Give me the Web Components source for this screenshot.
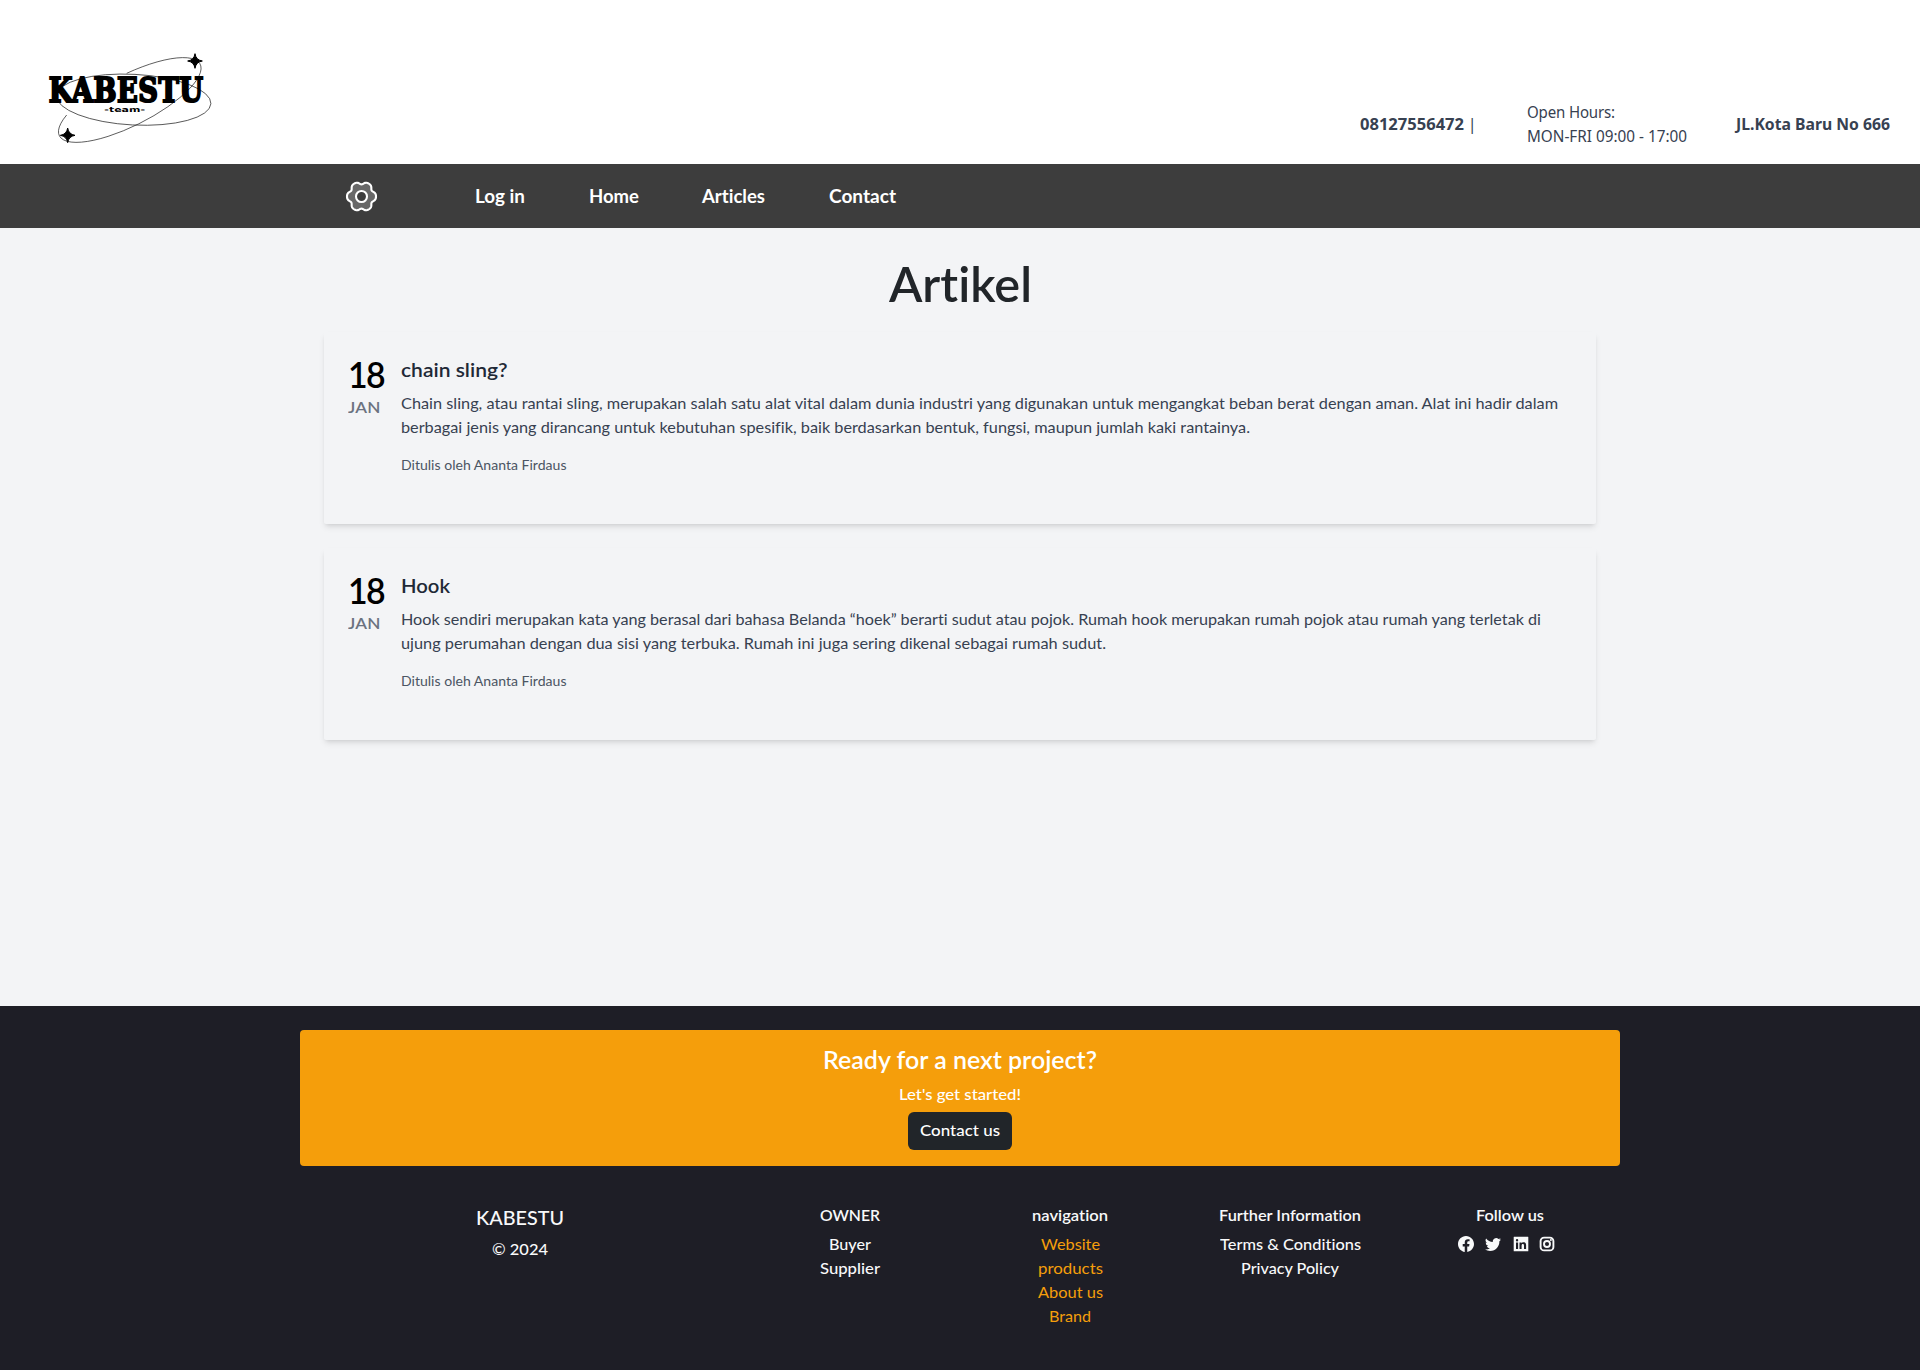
<!DOCTYPE html>
<html lang="id">
<head>
<meta charset="utf-8">
<title>Artikel - KABESTU</title>
<style>
html,body{margin:0;padding:0}
body{font-family:Lato,"Open Sans",sans-serif;font-size:16px;line-height:24px;font-variant-ligatures:none;background:#f3f4f6;color:#212529}
</style>
</head>
<body>
<kb-page></kb-page>
<script>
// A single line of text fitted to an exact width (attribute w, in px):
// the glyphs are stretched a little, and letter-spacing takes up the rest.
customElements.define('fit-line', class extends HTMLElement {
  connectedCallback() {
    if (!this.shadowRoot) this.attachShadow({mode: 'open'}).innerHTML =
      '<style>:host{display:block;white-space:nowrap;text-align:left}span{display:inline-block;transform-origin:0 50%;font-variant-ligatures:none}</style><span><slot></slot></span>';
    const s = this.shadowRoot.querySelector('span');
    const w = parseFloat(this.getAttribute('w'));
    if (!w) return;
    const natural = s.getBoundingClientRect().width;
    const k = Math.min(1.07, Math.max(.94, w / natural));
    s.style.letterSpacing = ((w / k - natural) / this.textContent.length).toFixed(3) + 'px';
    s.style.transform = `scaleX(${k.toFixed(4)})`;
    this.style.width = w + 'px';
  }
});

const element = (name, html) => customElements.define(name, class extends HTMLElement {
  connectedCallback() {
    if (!this.shadowRoot) this.attachShadow({mode: 'open'}).innerHTML = html;
  }
});

element('kb-logo', `<style>:host{display:block;width:200px;height:120px}svg{display:block}</style>
<svg width="200" height="120" viewBox="0 0 600 360" fill="none" stroke="#222" stroke-width="2.2">
<ellipse cx="311" cy="179" rx="232" ry="76" transform="rotate(3 311 179)"/>
<path d="M290 100A237 76 -27 1 1 110 225"/>
<g fill="#000" stroke="none">
<path d="M495 41Q498 60 517 63Q498 66 495 85Q492 66 473 63Q492 60 495 41Z" stroke="#000" stroke-width="3"/>
<path d="M113 264Q116 283 135 286Q116 289 113 308Q110 289 91 286Q110 283 113 264Z" stroke="#000" stroke-width="3"/>
<text transform="translate(56 186) scale(.88 1.1)" font-family="DejaVu Serif,serif" font-weight="700" font-size="93" textLength="526" stroke="#000" stroke-width="6">KABESTU</text>
<text x="223" y="217" font-family="DejaVu Sans,sans-serif" font-weight="700" font-size="21" textLength="122" lengthAdjust="spacingAndGlyphs">-team-</text>
</g></svg>`);

customElements.define('kb-gear', class extends HTMLElement {
  connectedCallback() {
    let d = '';
    for (let i = 0; i < 120; i++) {
      const t = i * Math.PI / 60, r = 13.4 + 1.4 * Math.cos(6 * t) - .3 * Math.cos(12 * t);
      d += (i ? 'L' : 'M') + (16.5 + r * Math.cos(t)).toFixed(2) + ' ' + (16.5 + r * Math.sin(t) * 1.03).toFixed(2);
    }
    this.attachShadow({mode: 'open'}).innerHTML = `<style>:host{display:block;width:33px;height:32px}svg{display:block}</style>
<svg width="33" height="33" viewBox="0 0 33 33" fill="none" stroke="#fff" stroke-width="2.1"><path fill="#686868" d="${d}Z"/><circle cx="16.5" cy="16.5" r="5.500" fill="#3d3d3d"/></svg>`;
  }
});

element('kb-header', `<style>
:host{display:flex;height:164px;background:#fff;justify-content:space-between;box-sizing:border-box;padding:40px 30px 0 30px;color:#374151;font-family:"Noto Sans","Open Sans",sans-serif;font-size:16px}
.info{display:flex;align-items:center;height:48px;margin-top:60px}
.hours{margin:0 49.500px 0 50px}
.phone{display:flex;gap:4px}
.phone span{font-weight:400}
b{font-weight:700}
</style>
<kb-logo></kb-logo>
<div class="info"><b class="phone"><fit-line w="104">08127556472</fit-line><span>|</span></b>
<div class="hours"><fit-line w="88">Open Hours:</fit-line><fit-line w="160">MON-FRI 09:00 - 17:00</fit-line></div>
<b><fit-line w="154">JL.Kota Baru No 666</fit-line></b></div>`);

element('kb-nav', `<style>
:host{display:flex;align-items:center;height:64px;background:#3d3d3d;color:#fff;font-size:18px;font-weight:700;padding-left:345px}
nav{display:flex;gap:63.600px;margin-left:97px}
</style><kb-gear></kb-gear>
<nav><fit-line w="50">Log in</fit-line><fit-line w="50">Home</fit-line><fit-line w="63">Articles</fit-line><fit-line w="67">Contact</fit-line></nav>`);

element('kb-article', `<style>
:host{display:flex;height:192px;box-sizing:border-box;padding:24px;border-radius:2px;box-shadow:0 4px 6px -1px rgba(0,0,0,.1),0 2px 4px -2px rgba(0,0,0,.1)}
.date{width:53px;flex:none}
.day{font-size:36px;line-height:37px;padding-bottom:2px;color:#000;font-weight:600}
.mon{color:#6b7280;font-weight:600}
.title{font-size:20px;line-height:27px;margin-bottom:8px;color:#1f2937;font-weight:600}
.text{color:#374151}
.by{font-size:14px;line-height:20px;margin-top:16px;color:#4b5563}
</style>
<div class="date"><div class="day"><fit-line w="36">18</fit-line></div><div class="mon"><fit-line w="32.5">JAN</fit-line></div></div>
<div><div class="title"><slot name="title"></slot></div><div class="text"><slot></slot></div><div class="by"><fit-line w="165.5">Ditulis oleh Ananta Firdaus</fit-line></div></div>`);

element('kb-articles', `<style>
:host{display:flex;flex-direction:column;align-items:center;height:778px;box-sizing:border-box;padding-top:27px}
h1{font-size:48px;line-height:57px;font-weight:600;margin:0 0 20px;color:#212529}
.list{width:1272px;display:flex;flex-direction:column;gap:24px}
</style><h1><fit-line w="143">Artikel</fit-line></h1>
<div class="list">
<kb-article><fit-line slot="title" w="106.5">chain sling?</fit-line>
<fit-line w="1157">Chain sling, atau rantai sling, merupakan salah satu alat vital dalam dunia industri yang digunakan untuk mengangkat beban berat dengan aman. Alat ini hadir dalam</fit-line>
<fit-line w="849">berbagai jenis yang dirancang untuk kebutuhan spesifik, baik berdasarkan bentuk, fungsi, maupun jumlah kaki rantainya.</fit-line></kb-article>
<kb-article><fit-line slot="title" w="49">Hook</fit-line>
<fit-line w="1140">Hook sendiri merupakan kata yang berasal dari bahasa Belanda “hoek” berarti sudut atau pojok. Rumah hook merupakan rumah pojok atau rumah yang terletak di</fit-line>
<fit-line w="705">ujung perumahan dengan dua sisi yang terbuka. Rumah ini juga sering dikenal sebagai rumah sudut.</fit-line></kb-article>
</div>`);

element('kb-cta', `<style>
:host{display:flex;flex-direction:column;align-items:center;height:136px;box-sizing:border-box;padding-top:17px;background:#f59e0b;border-radius:4px;color:#fff}
.h{font-size:24px;line-height:26px;padding-bottom:9px;font-weight:600}
.p{font-weight:500;margin-bottom:6px}
button{font:500 16px/24px Lato,sans-serif;color:#fff;background:#212529;border:0;border-radius:6px;padding:6px 0 8px;width:104px;height:38px;display:flex;justify-content:center}
</style><div class="h"><fit-line w="274">Ready for a next project?</fit-line></div><div class="p"><fit-line w="122">Let's get started!</fit-line></div><button><fit-line w="80">Contact us</fit-line></button>`);

element('kb-column', `<style>
:host{display:flex;flex-direction:column;align-items:center;font-weight:500}
.head{font-weight:600;margin-bottom:5px}
</style><div class="head"><slot name="head"></slot></div><slot></slot>`);

element('kb-social', `<style>:host{display:flex;gap:11.500px;padding:4px 0 0;margin-left:-7px}svg{display:block;fill:#f8f9fa;width:16px;height:16px}</style>
<svg viewBox="0 0 16 16"><path d="M16 8.049c0-4.446-3.582-8.05-8-8.05C3.58 0-.002 3.603-.002 8.05c0 4.017 2.926 7.347 6.75 7.951v-5.625h-2.03V8.05H6.75V6.275c0-2.017 1.195-3.131 3.022-3.131.876 0 1.791.157 1.791.157v1.98h-1.009c-.993 0-1.303.621-1.303 1.258v1.51h2.218l-.354 2.326H9.25V16c3.824-.604 6.75-3.934 6.75-7.951z"/></svg>
<svg viewBox="0 0 16 16"><path d="M5.026 15c6.038 0 9.341-5.003 9.341-9.334 0-.14 0-.282-.006-.422A6.685 6.685 0 0 0 16 3.542a6.658 6.658 0 0 1-1.889.518 3.301 3.301 0 0 0 1.447-1.817 6.533 6.533 0 0 1-2.087.793A3.286 3.286 0 0 0 7.875 6.03a9.325 9.325 0 0 1-6.767-3.429 3.289 3.289 0 0 0 1.018 4.382A3.323 3.323 0 0 1 .64 6.575v.045a3.288 3.288 0 0 0 2.632 3.218 3.203 3.203 0 0 1-.865.115 3.23 3.23 0 0 1-.614-.057 3.283 3.283 0 0 0 3.067 2.277A6.588 6.588 0 0 1 .78 13.58a6.32 6.32 0 0 1-.78-.045A9.344 9.344 0 0 0 5.026 15z"/></svg>
<svg viewBox="0 0 16 16"><path fill-rule="evenodd" d="M1 .8h14a.3.3 0 0 1 .3.3v13.8a.3.3 0 0 1-.3.3H1a.3.3 0 0 1-.3-.3V1.100A.3.3 0 0 1 1 .8zM3 6.400v6.700h2.100V6.400zM4.050 3.100a1.200 1.200 0 1 0 0 2.400 1.200 1.200 0 0 0 0-2.400zM6.500 6.400v6.700h2.100V9.600c0-1 .4-1.600 1.200-1.600.9 0 1.200.6 1.200 1.700v3.400h2.100V9.200c0-2-1-3-2.500-3-1 0-1.700.5-2 1.100V6.400z"/></svg>
<svg viewBox="0 0 16 16" style="margin-left:-1px"><g style="fill:none;stroke:#f8f9fa;stroke-width:1.900"><rect x="1.600" y="1.600" width="12.800" height="12.800" rx="3.500"/><circle cx="8" cy="8" r="3"/></g><circle cx="11.900" cy="4.100" r="1"/></svg>`);

element('kb-footer', `<style>
:host{display:block;height:364px;box-sizing:border-box;padding:24px 300px 0;background:#1e1e26;color:#f8f9fa}
.cols{display:grid;grid-template-columns:2fr 1fr 1fr 1fr 1fr;margin-top:37px}
.brand{display:flex;flex-direction:column;align-items:center;padding-top:2px;font-weight:500}
.name{font-size:20px;line-height:24px;margin-bottom:8px}
.gold{color:#f59e0b;font-weight:400}
</style><kb-cta></kb-cta>
<div class="cols">
<div class="brand"><div class="name"><fit-line w="88">KABESTU</fit-line></div><fit-line w="56">© 2024</fit-line></div>
<kb-column><fit-line slot="head" w="60">OWNER</fit-line><fit-line w="42">Buyer</fit-line><fit-line w="60">Supplier</fit-line></kb-column>
<kb-column><fit-line slot="head" w="76">navigation</fit-line><fit-line class="gold" w="59">Website</fit-line><fit-line class="gold" w="65">products</fit-line><fit-line class="gold" w="65">About us</fit-line><fit-line class="gold" w="42">Brand</fit-line></kb-column>
<kb-column><fit-line slot="head" w="142">Further Information</fit-line><fit-line w="141">Terms &amp; Conditions</fit-line><fit-line w="98">Privacy Policy</fit-line></kb-column>
<kb-column><fit-line slot="head" w="68">Follow us</fit-line><kb-social></kb-social></kb-column>
</div>`);

element('kb-page', `<style>:host{display:block}</style><kb-header></kb-header><kb-nav></kb-nav><kb-articles></kb-articles><kb-footer></kb-footer>`);
</script>
</body>
</html>
